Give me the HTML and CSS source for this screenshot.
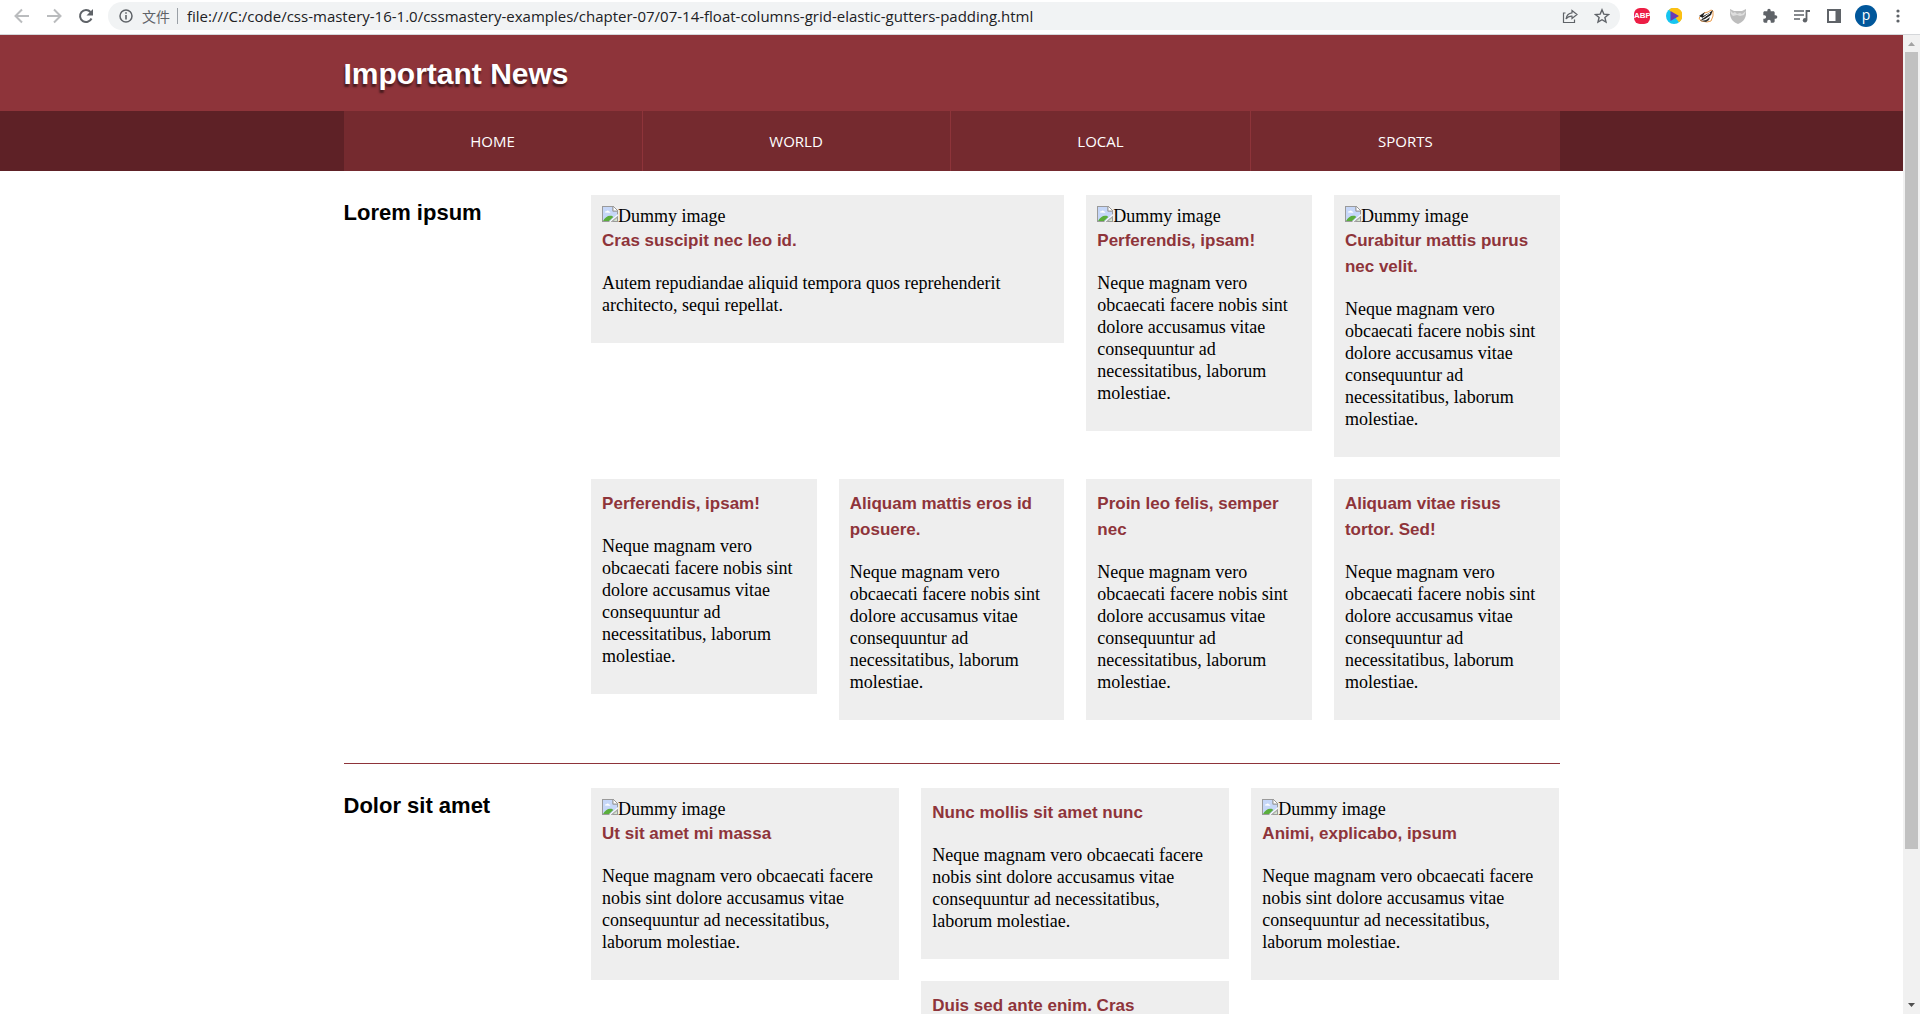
FILE: index.html
```html
<!DOCTYPE html>
<html lang="en">
<head>
<meta charset="utf-8">
<title>Important News</title>
<link rel="stylesheet" href="styles.css">
</head>
<body>
<svg class="defs" aria-hidden="true">
  <symbol id="broken" viewBox="0 0 16 16">
    <path d="M0 0h11l5 5v5.500l-6.500 5.500H0z" fill="#9a9a9a"/>
    <path d="M1 1h9.500v4.500H15v4.500L8.500 15H1z" fill="#c6d7f8"/>
    <path d="M3 6.500c0-1 .8-1.500 1.500-1.300.5-1.200 2.200-1 2.500.2 1 0 1.300.6 1.300 1.300z" fill="#fff"/>
    <path d="M1 15c2-3.500 4.500-5.500 7.500-5.300 1.200 0 2.200.5 2.800 1.300L7 15z" fill="#5bae3c"/>
    <path d="M11 0l5 5h-5z" fill="#fff" stroke="#9a9a9a"/>
    <path d="M16 10.500V16H9.500z" fill="#9a9a9a"/>
    <path d="M16 9.500L8.500 16H7L16 8z" fill="#fff"/>
    <path d="M15 12v3h-3.500z" fill="#d5e8cf"/>
  </symbol>
</svg>

<div class="toolbar">
  <button class="tool faded" aria-label="Back"><svg viewBox="0 0 16 16"><path d="M15 8H2M8 1.500L1.500 8 8 14.500" fill="none" stroke="currentColor" stroke-width="2"/></svg></button>
  <button class="tool faded" aria-label="Forward"><svg viewBox="0 0 16 16"><path d="M1 8h13M8 1.500L14.500 8 8 14.500" fill="none" stroke="currentColor" stroke-width="2"/></svg></button>
  <button class="tool" aria-label="Reload"><svg viewBox="0 0 16 16"><path d="M13.500 10.500A6 6 0 1 1 12.500 4" fill="none" stroke="currentColor" stroke-width="2"/><path d="M15 1v6.500H8.500z" fill="currentColor"/></svg></button>
  <div class="address">
    <svg class="info" viewBox="0 0 14 14"><circle cx="7" cy="7" r="6" fill="none" stroke="currentColor" stroke-width="1.500"/><path d="M6.200 6h1.600v4.500H6.200zM6.200 3.200h1.600v1.600H6.200z" fill="currentColor"/></svg>
    <label class="scheme" for="url">文件</label>
    <input class="url" id="url" type="text" value="file:///C:/code/css-mastery-16-1.0/cssmastery-examples/chapter-07/07-14-float-columns-grid-elastic-gutters-padding.html">
    <button class="tool" aria-label="Share"><svg viewBox="0 0 16 16"><path d="M3.500 5H1.500v9.500h11V11.500" fill="none" stroke="currentColor" stroke-width="1.200"/><path d="M10 2.500L15 6.500 10 10.500V8.200C7.500 8 5.500 9 4 11c.5-3.500 2.500-5.800 6-6.200z" fill="none" stroke="currentColor" stroke-width="1.200"/></svg></button>
    <button class="tool" aria-label="Bookmark"><svg viewBox="0 0 16 16"><path d="M8 1.800l1.800 4.300 4.700.4-3.600 3 1.100 4.600L8 11.700l-4 2.400 1.100-4.600-3.600-3 4.700-.4z" fill="none" stroke="currentColor" stroke-width="1.400"/></svg></button>
  </div>
  <button class="tool" aria-label="Adblock Plus"><span class="abp">ABP</span></button>
  <button class="tool" aria-label="Video"><svg viewBox="0 0 16 16"><circle cx="8" cy="8" r="8" fill="#15c5f0"/><path d="M3 1.800A8 8 0 1 1 13 14.200L8 8z" fill="#fcc013"/><path d="M4.500 3v10L13 8z" fill="#6a3bb5"/></svg></button>
  <button class="tool" aria-label="Badger"><svg viewBox="0 0 16 16"><path d="M1 10L6 5l4-1 3-2 2 1v5l-2 5-4 1-6-1z" fill="#fff" stroke="#ec9b4b"/><path d="M1 8l6-4-2 4 6-3 4-3-2 5-6 4-5 2 3-3z" fill="#222"/><path d="M3 13l5-1 4-3-1 3-3 2z" fill="#333"/><path d="M5 10l7-5" stroke="#fff"/></svg></button>
  <button class="tool" aria-label="Shield"><svg viewBox="0 0 16 16"><path d="M0 1l4 2h8l4-2c1 8-2 13-8 15C2 14-1 9 0 1z" fill="#bdbdbd"/><path d="M0 2l3 3 2-1 2 2 3-1 2 1 4-3-2 4-4 1-3-1-4 1-2-2z" fill="#dedede"/></svg></button>
  <button class="tool" aria-label="Extensions"><svg viewBox="0 0 24 24"><path d="M20.500 11H19V7c0-1.100-.9-2-2-2h-4V3.500a2.500 2.500 0 0 0-5 0V5H4c-1.100 0-2 .9-2 2v3.800h1.500a2.700 2.700 0 0 1 0 5.400H2V20c0 1.100.9 2 2 2h3.800v-1.500a2.700 2.700 0 0 1 5.400 0V22H17c1.100 0 2-.9 2-2v-4h1.500a2.500 2.500 0 0 0 0-5z" fill="currentColor"/></svg></button>
  <button class="tool" aria-label="Media controls"><svg viewBox="0 0 16 16"><path d="M0 3h10M0 7h10M0 11h6" stroke="currentColor" stroke-width="1.600"/><path d="M16 3h-3.500v9" fill="none" stroke="currentColor" stroke-width="1.800"/><circle cx="11" cy="12.300" r="2.200" fill="currentColor"/></svg></button>
  <button class="tool" aria-label="Side panel"><svg viewBox="0 0 16 16"><path d="M1 1h14v14H1z" fill="currentColor"/><path d="M3 3h6.500v10H3z" fill="#fff"/></svg></button>
  <button class="tool" aria-label="Profile"><span class="avatar">p</span></button>
  <button class="tool" aria-label="Menu"><svg viewBox="0 0 16 16"><circle cx="8" cy="3" r="1.600" fill="currentColor"/><circle cx="8" cy="8" r="1.600" fill="currentColor"/><circle cx="8" cy="13" r="1.600" fill="currentColor"/></svg></button>
</div>

<div class="viewport">
  <div class="page">
    <header class="masthead">
      <h1 class="wrap">Important News</h1>
    </header>
    <nav class="navbar">
      <ul class="wrap nav-list">
        <li><a href="#home">Home</a></li>
        <li><a href="#world">World</a></li>
        <li><a href="#local">Local</a></li>
        <li><a href="#sports">Sports</a></li>
      </ul>
    </nav>
    <main class="wrap">
      <section class="news">
        <h2>Lorem ipsum</h2>
        <div class="stories quarters">
          <article class="story wide">
            <div class="thumb"><svg><use href="#broken"/></svg>Dummy image</div>
            <h3>Cras suscipit nec leo id.</h3>
            <p>Autem repudiandae aliquid tempora quos reprehenderit architecto, sequi repellat.</p>
          </article>
          <article class="story">
            <div class="thumb"><svg><use href="#broken"/></svg>Dummy image</div>
            <h3>Perferendis, ipsam!</h3>
            <p>Neque magnam vero obcaecati facere nobis sint dolore accusamus vitae consequuntur ad necessitatibus, laborum molestiae.</p>
          </article>
          <article class="story">
            <div class="thumb"><svg><use href="#broken"/></svg>Dummy image</div>
            <h3>Curabitur mattis purus nec velit.</h3>
            <p>Neque magnam vero obcaecati facere nobis sint dolore accusamus vitae consequuntur ad necessitatibus, laborum molestiae.</p>
          </article>
          <article class="story">
            <h3>Perferendis, ipsam!</h3>
            <p>Neque magnam vero obcaecati facere nobis sint dolore accusamus vitae consequuntur ad necessitatibus, laborum molestiae.</p>
          </article>
          <article class="story">
            <h3>Aliquam mattis eros id posuere.</h3>
            <p>Neque magnam vero obcaecati facere nobis sint dolore accusamus vitae consequuntur ad necessitatibus, laborum molestiae.</p>
          </article>
          <article class="story">
            <h3>Proin leo felis, semper nec</h3>
            <p>Neque magnam vero obcaecati facere nobis sint dolore accusamus vitae consequuntur ad necessitatibus, laborum molestiae.</p>
          </article>
          <article class="story">
            <h3>Aliquam vitae risus tortor. Sed!</h3>
            <p>Neque magnam vero obcaecati facere nobis sint dolore accusamus vitae consequuntur ad necessitatibus, laborum molestiae.</p>
          </article>
        </div>
      </section>
      <section class="news">
        <h2>Dolor sit amet</h2>
        <div class="stories thirds">
          <article class="story">
            <div class="thumb"><svg><use href="#broken"/></svg>Dummy image</div>
            <h3>Ut sit amet mi massa</h3>
            <p>Neque magnam vero obcaecati facere nobis sint dolore accusamus vitae consequuntur ad necessitatibus, laborum molestiae.</p>
          </article>
          <div class="stack">
            <article class="story">
              <h3>Nunc mollis sit amet nunc</h3>
              <p>Neque magnam vero obcaecati facere nobis sint dolore accusamus vitae consequuntur ad necessitatibus, laborum molestiae.</p>
            </article>
            <article class="story">
              <h3>Duis sed ante enim. Cras</h3>
            </article>
          </div>
          <article class="story">
            <div class="thumb"><svg><use href="#broken"/></svg>Dummy image</div>
            <h3>Animi, explicabo, ipsum</h3>
            <p>Neque magnam vero obcaecati facere nobis sint dolore accusamus vitae consequuntur ad necessitatibus, laborum molestiae.</p>
          </article>
        </div>
      </section>
    </main>
  </div>
  <div class="scrollbar" aria-hidden="true">
    <svg class="arrow" viewBox="0 0 17 17"><path d="M5 11h7L8.500 7z" fill="#a3a3a3"/></svg>
    <div class="track"><div class="thumb-bar"></div></div>
    <svg class="arrow" viewBox="0 0 17 17"><path d="M5 6h7L8.500 10z" fill="#505050"/></svg>
  </div>
</div>
</body>
</html>
```
FILE: styles.css
```css
* {
  box-sizing: border-box;
}

body {
  margin: 0;
  height: 100vh;
  display: flex;
  flex-direction: column;
  overflow: hidden;
  background: #fff;
  color: #000;
  font: 18px/22px "Liberation Serif", serif;
}

.defs {
  position: absolute;
  width: 0;
  height: 0;
}

/* Browser toolbar */
.toolbar {
  flex: none;
  display: flex;
  align-items: center;
  padding: 2px 6px 4px;
  border-bottom: 1px solid #d5d7da;
}

.tool {
  flex: none;
  width: 32px;
  height: 28px;
  padding: 0;
  border: 0;
  background: none;
  color: #5f6368;
  display: flex;
  align-items: center;
  justify-content: center;
}

.tool svg {
  width: 16px;
  height: 16px;
}

.faded {
  color: #babcbe;
}

.address {
  flex: 1;
  display: flex;
  align-items: center;
  height: 28px;
  margin: 0 6px;
  padding: 0 2px 0 11px;
  border-radius: 14px;
  background: #f1f3f4;
}

.info {
  width: 14px;
  height: 14px;
  color: #5f6368;
}

.scheme {
  margin-left: 9px;
  padding-right: 7px;
  border-right: 1px solid #9aa0a6;
  color: #5f6368;
  font: 14px/16px "Noto Sans CJK SC", sans-serif;
}

.url {
  flex: 1;
  min-width: 0;
  padding: 0 0 0 9px;
  border: 0;
  background: none;
  color: #202124;
  font: 15px/20px "Open Sans", sans-serif;
}

.abp {
  width: 16px;
  height: 16px;
  border-radius: 6px;
  background: #ed1e45;
  color: #fff;
  font: bold 8px/16px "Liberation Sans", sans-serif;
}

.avatar {
  width: 22px;
  height: 22px;
  border-radius: 50%;
  background: #01579b;
  color: #fff;
  font: 14px/20px "Open Sans", sans-serif;
}

/* Page area beside its scrollbar */
.viewport {
  flex: 1;
  min-height: 0;
  display: flex;
  overflow: hidden;
}

.page {
  flex: 1;
  min-width: 0;
}

.scrollbar {
  width: 17px;
  display: flex;
  flex-direction: column;
  background: #f1f1f1;
}

.arrow {
  flex: none;
  width: 17px;
  height: 17px;
}

.track {
  flex: 1;
  padding: 0 2px;
}

.thumb-bar {
  height: 84.3%;
  background: #c1c1c1;
}

.wrap {
  max-width: 1216px;
  margin: 0 auto;
}

.masthead {
  padding: 17px 0 15px;
  background: #8e343a;
}

h1 {
  color: #fff;
  font: bold 30px/44px "Liberation Sans", sans-serif;
  text-shadow: -1px 3px 2px rgba(0, 0, 0, 0.5);
}

.navbar {
  background: #5e2126;
}

.nav-list {
  display: flex;
  padding: 0;
  list-style: none;
}

.nav-list li {
  flex: 1 1 auto;
  background: #752a2f;
}

.nav-list li + li {
  border-left: 1px solid #8e343a;
}

.nav-list a {
  display: block;
  color: #fff;
  font: 15px/60px "Open Sans", sans-serif;
  text-align: center;
  text-decoration: none;
  text-transform: uppercase;
}

/* News sections */
.news {
  display: grid;
  grid-template-columns: repeat(5, 1fr);
  column-gap: 22px;
  padding: 24px 0 43px;
}

.news + .news {
  border-top: 1px solid #8e343a;
}

h2 {
  margin: 0;
  font: bold 22px/36px "Liberation Sans", sans-serif;
}

.stories {
  grid-column: span 4;
  display: grid;
  gap: 22px;
  align-items: start;
}

.quarters {
  grid-template-columns: repeat(4, 1fr);
}

.thirds {
  grid-template-columns: repeat(3, 1fr);
}

.wide {
  grid-column: span 2;
}

.stack {
  display: grid;
  gap: 22px;
}

.story {
  padding: 11px;
  background: #eee;
}

.thumb {
  height: 21px;
  line-height: 20px;
}

.thumb svg {
  width: 16px;
  height: 16px;
}

h3 {
  margin: 0 0 18px;
  padding-top: 1px;
  color: #8e343a;
  font: bold 17px/26px "Liberation Sans", sans-serif;
}

.story p {
  margin: 0 0 16px;
}
```
